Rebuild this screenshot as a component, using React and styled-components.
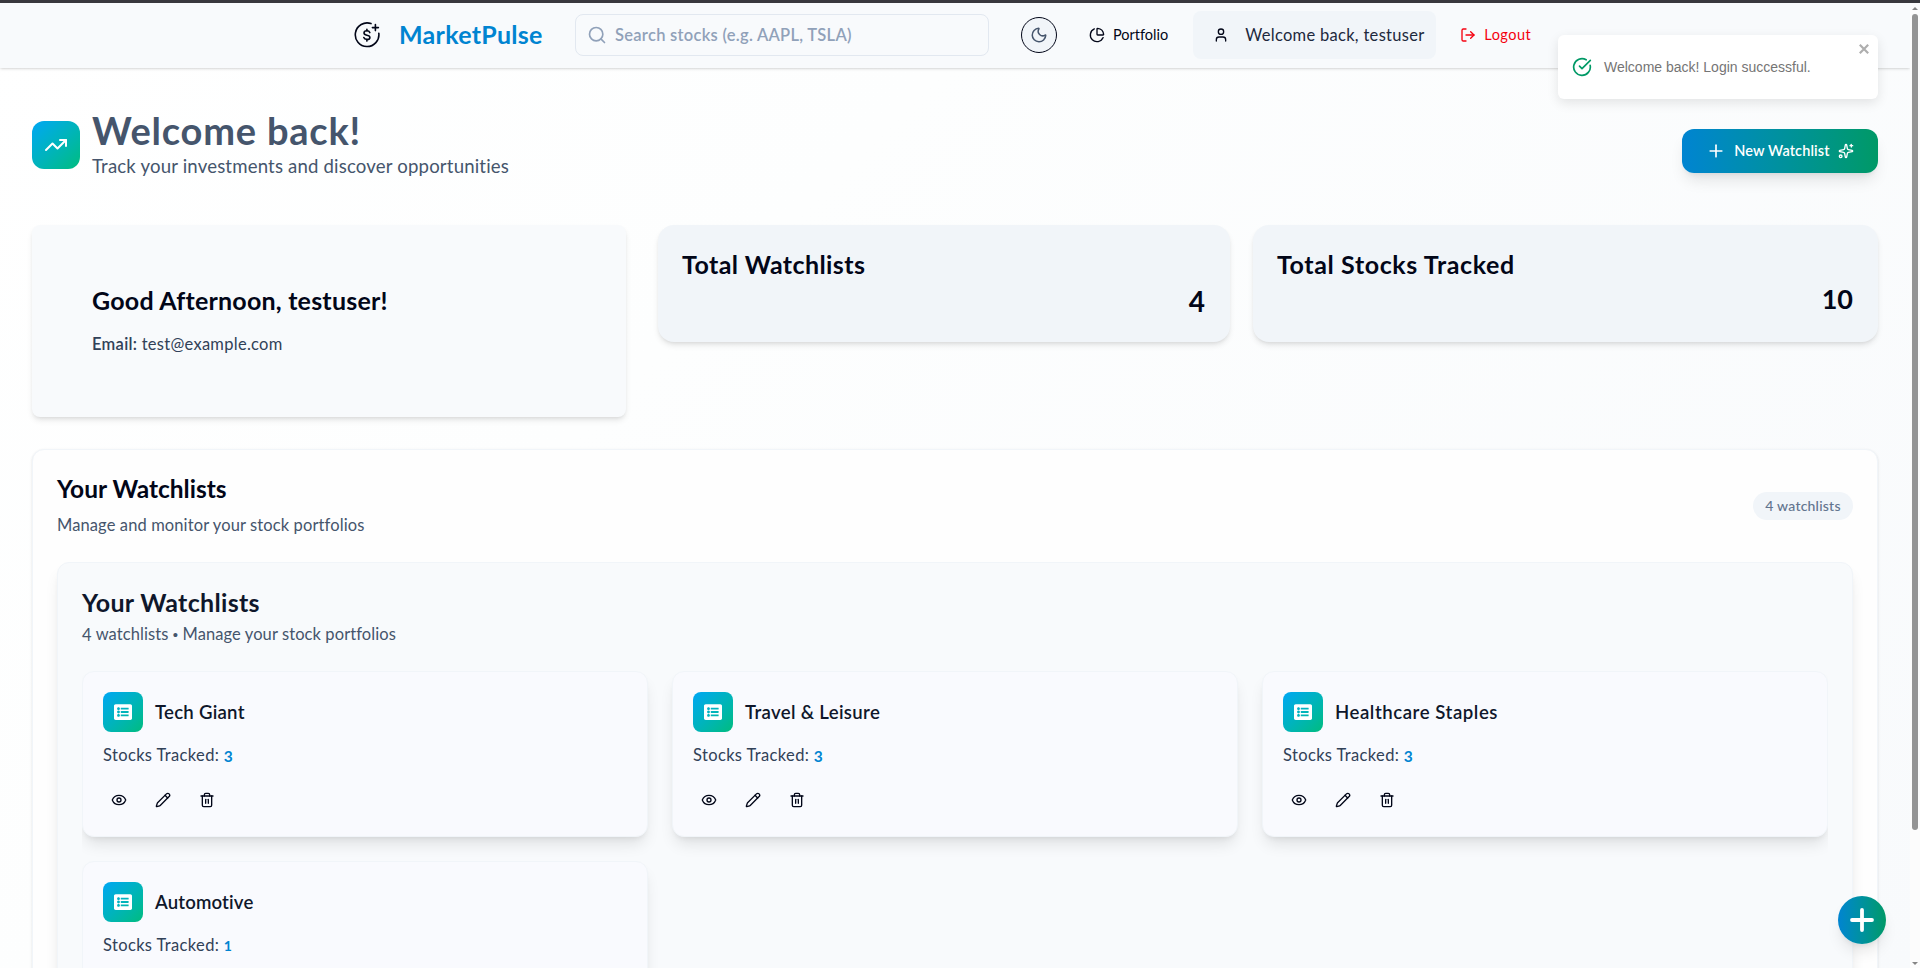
import React from "react";
import styled, { createGlobalStyle } from "styled-components";
import {
  ChartPie, CircleCheckBig, Eye, LogOut, Moon, Pencil, Plus, Search, Sparkles, Trash2, TrendingUp, User,
} from "lucide-react";
import { FaListAlt } from "react-icons/fa";

const GlobalStyle = createGlobalStyle`
  * { box-sizing: border-box; }
  html, body { margin: 0; height: 968px; overflow: hidden; }
  body { font-family: Lato, "Liberation Sans", sans-serif; color: #020618; font-variant-ligatures: none; }
  h1, h2, h3, p { margin: 0; }
  button { font: inherit; color: inherit; border: 0; padding: 0; background: none; }
  svg { flex: none; display: block; }
`;

const Screen = styled.div`
  display: grid;
  grid-template-columns: minmax(0, 1fr) 10px;
  height: 968px;
  overflow: hidden;
  border-top: 3px solid #38383d;
`;

const Page = styled.div`
  height: 965px;
  overflow: hidden;
  background: linear-gradient(135deg, #ffffff 0%, #fdfefe 35%, #f8fafc 100%);
`;

const Text = styled.span`
  font-size: ${(p) => p.$size || 16.5}px;
  font-weight: ${(p) => p.$weight || 400};
  line-height: ${(p) => p.$line || 24}px;
  letter-spacing: ${(p) => p.$track || 0}px;
  color: ${(p) => p.$color || "inherit"};
  white-space: pre;
`;

const Lowered = styled.span`
  position: relative;
  top: ${(p) => p.$by || 2}px;
`;

const Bullet = styled.span`
  font-family: "Liberation Sans", Arial, sans-serif;
  font-size: 15px;
`;

/* Header */
const Header = styled.header`
  display: flex;
  align-items: center;
  height: 65px;
  padding: 0 0 2px 354px;
  background: #f8fafc;
  box-shadow: 0 1px 3px rgba(0, 0, 0, 0.12), 0 1px 2px -1px rgba(0, 0, 0, 0.12);
`;

const Brand = styled.div`
  display: flex;
  align-items: center;
  gap: 19px;
  width: 221px;
`;

const BrandName = styled.div`
  display: flex;
  padding-bottom: 2px;
`;

const SearchBox = styled.div`
  display: flex;
  align-items: center;
  gap: 8px;
  width: 414px;
  height: 42px;
  padding: 0 11px;
  border: 1px solid #e2e8f0;
  border-radius: 8px;
  color: #90a1b9;
`;

const ThemeToggle = styled.button`
  display: grid;
  place-items: center;
  width: 36px;
  height: 36px;
  margin-left: 32px;
  border: 1px solid #020618;
  border-radius: 50%;
  background: #f1f5f9;
  color: #45556c;
`;

const NavButton = styled.button`
  display: flex;
  align-items: center;
  gap: 8px;
  margin-left: ${(p) => p.$left}px;
  color: ${(p) => p.$color || "#020618"};
`;

const UserChip = styled.div`
  display: flex;
  align-items: center;
  gap: 16px;
  width: 243px;
  height: 48px;
  margin-left: 25px;
  padding: 0 0 0 20px;
  border-radius: 8px;
  background: #f1f5f9;
`;

/* Toast */
const Toast = styled.div`
  position: absolute;
  top: 35px;
  left: 1558px;
  display: flex;
  align-items: center;
  gap: 12px;
  width: 320px;
  height: 64px;
  padding: 0 9px 0 14px;
  border-radius: 6px;
  background: #fff;
  box-shadow: 0 4px 12px rgba(0, 0, 0, 0.1);
  font-family: "Liberation Sans", Arial, sans-serif;
  color: #757575;
`;

const ToastClose = styled.svg`
  align-self: flex-start;
  margin: 9px 0 0 auto;
`;

/* Page heading */
const Main = styled.main`
  padding: 41px 32px 0;
`;

const Hero = styled.div`
  display: flex;
  align-items: center;
  height: 71px;
  margin-bottom: 45px;
`;

const GradientTile = styled.div`
  display: grid;
  place-items: center;
  flex: none;
  width: ${(p) => p.$size}px;
  height: ${(p) => p.$size}px;
  border-radius: ${(p) => p.$radius}px;
  background: linear-gradient(135deg in oklab, #00a6f4, #00bc7d);
  color: #fff;
`;

const HeroCopy = styled.div`
  display: flex;
  flex-direction: column;
  gap: 2px;
  margin-left: 12px;
  padding-top: 1px;
`;

const PrimaryButton = styled.button`
  display: flex;
  align-items: center;
  justify-content: center;
  gap: 8px;
  width: 196px;
  height: 44px;
  margin: 13px 0 0 auto;
  border-radius: 12px;
  background: linear-gradient(90deg in oklab, #0084d1, #009966);
  color: #fff;
  box-shadow: 0 10px 15px -3px rgba(0, 0, 0, 0.1), 0 4px 6px -4px rgba(0, 0, 0, 0.1);
`;

/* Summary */
const Summary = styled.section`
  display: flex;
  align-items: flex-start;
  height: 192px;
`;

const GreetingCard = styled.div`
  display: flex;
  flex-direction: column;
  gap: 16px;
  width: 594px;
  height: 192px;
  padding: 59px 60px;
  border-radius: 8px;
  background: #f8fafc;
  box-shadow: 0 4px 6px -1px rgba(0, 0, 0, 0.1), 0 2px 4px -2px rgba(0, 0, 0, 0.1);
`;

const StatCard = styled.div`
  display: flex;
  flex-direction: column;
  gap: 1px;
  width: ${(p) => p.$width}px;
  height: 117px;
  margin-left: ${(p) => p.$left}px;
  padding: 23px 25px 0 24px;
  border-radius: 16px;
  background: #f1f5f9;
  box-shadow: 0 4px 6px -1px rgba(0, 0, 0, 0.1), 0 2px 4px -2px rgba(0, 0, 0, 0.1);
`;

const StatValue = styled.div`
  align-self: flex-end;
`;

/* Watchlists */
const Panel = styled.section`
  height: 640px;
  margin-top: 32px;
  padding: 23px 24px;
  border: 1px solid #f1f5f9;
  border-radius: 12px;
  background: #fefefe;
  box-shadow: 0 1px 3px rgba(0, 0, 0, 0.1), 0 1px 2px -1px rgba(0, 0, 0, 0.1);
`;

const PanelHead = styled.div`
  display: flex;
  justify-content: space-between;
  align-items: center;
  height: 64px;
  margin-bottom: 25px;
`;

const Stack = styled.div`
  display: flex;
  flex-direction: column;
  gap: ${(p) => p.$gap}px;
`;

const Badge = styled.span`
  display: grid;
  place-items: center;
  width: 100px;
  height: 28px;
  margin-top: 2px;
  border-radius: 14px;
  background: #f1f5f9;
`;

const InnerPanel = styled.div`
  height: 560px;
  padding: 23px 24px;
  border: 1px solid #f1f5f9;
  border-radius: 12px;
  background: #f8fafc;
  box-shadow: 0 10px 15px -3px rgba(0, 0, 0, 0.1), 0 4px 6px -4px rgba(0, 0, 0, 0.1);
`;

const CardGrid = styled.div`
  display: grid;
  grid-template-columns: repeat(3, 1fr);
  gap: 24px;
  margin-top: 24px;
  overflow: hidden;
  padding-bottom: 30px;
`;

const WatchCard = styled.article`
  height: 166px;
  padding: 20px;
  border: 1px solid #f1f5f9;
  border-radius: 12px;
  background: #f9fafe;
  box-shadow: 0 10px 15px -3px rgba(0, 0, 0, 0.1), 0 4px 6px -4px rgba(0, 0, 0, 0.1);
`;

const CardTitle = styled.div`
  display: flex;
  align-items: center;
  gap: 12px;
  margin-bottom: 11px;
`;

const CardMeta = styled.div`
  height: 24px;
  line-height: 24px;
`;

const Actions = styled.div`
  display: flex;
  gap: 12px;
  margin-top: 17px;
`;

const IconButton = styled.button`
  display: grid;
  place-items: center;
  width: 32px;
  height: 32px;
`;

const Fab = styled.button`
  position: absolute;
  left: 1838px;
  top: 896px;
  display: grid;
  place-items: center;
  width: 48px;
  height: 48px;
  border-radius: 50%;
  background: linear-gradient(90deg in oklab, #0084d1, #009966);
  box-shadow: 0 10px 15px -3px rgba(0, 0, 0, 0.1), 0 4px 6px -4px rgba(0, 0, 0, 0.1);
`;

/* Scrollbar */
const Scrollbar = styled.div`
  display: flex;
  flex-direction: column;
  align-items: center;
  padding: 4px 1px 3px;
  background: #fcfcfc;
`;

const Thumb = styled.div`
  width: 6px;
  height: 816px;
  margin: 4px 0 auto;
  border-radius: 3px;
  background: #949494;
`;

const Arrow = ({ down }) => (
  <svg width="6" height="3" viewBox="0 0 6 3">
    <path d={down ? "M0 0h6L3 3z" : "M0 3h6L3 0z"} fill="#858585" />
  </svg>
);

const LogoMark = () => (
  <svg width="26" height="26" viewBox="0 0 26 26" fill="none" stroke="#020618" strokeWidth="1.6" strokeLinecap="round" strokeLinejoin="round">
    <path d="M17 1.6A11.8 11.8 0 1 0 24.8 11.2" />
    <path d="M21.4 2.6v6M18.4 5.6h6" />
    <path d="M12.9 7.2v1.6M12.9 17.4v1.7" />
    <path d="M15.8 10.6c-.4-1.1-1.5-1.8-2.9-1.8-1.7 0-2.9.9-2.9 2.2 0 1.4 1.2 1.9 2.9 2.2 1.8.3 3 .8 3 2.2 0 1.3-1.3 2.1-3 2.1-1.5 0-2.7-.7-3.1-1.9" />
  </svg>
);

const watchlists = [
  { name: "Tech Giant", count: 3, track: 0.25 },
  { name: "Travel & Leisure", count: 3, track: 0.33 },
  { name: "Healthcare Staples", count: 3, track: 0.55 },
  { name: "Automotive", count: 1, track: 0.15 },
];

function Watchlist({ name, count, track }) {
  return (
    <WatchCard>
      <CardTitle>
        <GradientTile $size={40} $radius={8}><FaListAlt size={18} /></GradientTile>
        <Text as="h3" $size={18.6} $weight={600} $track={track} $color="#0f172b">{name}</Text>
      </CardTitle>
      <CardMeta>
        <Text $track={0.36} $color="#314158">{"Stocks Tracked: "}</Text>
        {count === 1
          ? <Text $size={14} $weight={700} $color="#0084d1">{count}</Text>
          : <Lowered $by={1}><Text $size={15.5} $weight={700} $color="#0084d1">{count}</Text></Lowered>}
      </CardMeta>
      <Actions>
        <IconButton><Eye size={16} /></IconButton>
        <IconButton><Pencil size={16} /></IconButton>
        <IconButton><Trash2 size={16} /></IconButton>
      </Actions>
    </WatchCard>
  );
}

export default function App() {
  return (
    <Screen>
      <GlobalStyle />
      <Page>
        <Header>
          <Brand>
            <LogoMark />
            <BrandName>
              <Text $size={25} $weight={700} $line={30} $track={0.28} $color="#0084d1">MarketPulse</Text>
            </BrandName>
          </Brand>
          <SearchBox>
            <Search size={20} />
            <Text $weight={600} $track={0.28}>Search stocks (e.g. AAPL, TSLA)</Text>
          </SearchBox>
          <ThemeToggle><Moon size={18} /></ThemeToggle>
          <NavButton $left={32}>
            <ChartPie size={16} />
            <Text $size={14.5}>Portfolio</Text>
          </NavButton>
          <UserChip>
            <User size={16} />
            <Text $track={0.3} $color="#1d293d">Welcome back, testuser</Text>
          </UserChip>
          <NavButton $left={24} $color="#f5000f">
            <LogOut size={16} />
            <Text $size={14.5} $track={0.5}>Logout</Text>
          </NavButton>
        </Header>

        <Main>
          <Hero>
            <GradientTile $size={48} $radius={12}><TrendingUp size={24} /></GradientTile>
            <HeroCopy>
              <Text as="h1" $size={38} $weight={700} $line={40} $track={0.8} $color="#45556c">Welcome back!</Text>
              <Text as="p" $size={18.6} $line={28} $track={0.17} $color="#45556c">Track your investments and discover opportunities</Text>
            </HeroCopy>
            <PrimaryButton>
              <Plus size={20} />
              <Text $size={14.5} $weight={600} $track={0.12}>New Watchlist</Text>
              <Sparkles size={16} />
            </PrimaryButton>
          </Hero>

          <Summary>
            <GreetingCard>
              <Text as="h2" $size={25} $weight={700} $line={32} $track={0.22}>Good Afternoon, testuser!</Text>
              <Text as="p" $color="#314158">
                <Text $weight={600} $track={0.28}>Email: </Text>
                <Text $track={0.28}>test@example.com</Text>
              </Text>
            </GreetingCard>
            <StatCard $width={572} $left={32}>
              <Text as="h2" $size={25} $weight={700} $line={32} $track={0.42}>Total Watchlists</Text>
              <StatValue><Lowered $by={2}><Text $size={28} $weight={700} $line={36}>4</Text></Lowered></StatValue>
            </StatCard>
            <StatCard $width={625} $left={23}>
              <Text as="h2" $size={25} $weight={700} $line={32} $track={0.62}>Total Stocks Tracked</Text>
              <StatValue><Text $size={27} $weight={700} $line={36}>10</Text></StatValue>
            </StatCard>
          </Summary>

          <Panel>
            <PanelHead>
              <Stack $gap={8}>
                <Text as="h2" $size={24.5} $weight={700} $line={32}>Your Watchlists</Text>
                <Text as="p" $track={0.11} $color="#45556c">Manage and monitor your stock portfolios</Text>
              </Stack>
              <Badge><Text $size={14} $weight={500} $line={20} $track={0.22} $color="#62748e">4 watchlists</Text></Badge>
            </PanelHead>
            <InnerPanel>
              <Stack $gap={4}>
                <Text as="h2" $size={25} $weight={700} $line={32} $track={0.33} $color="#0f172b">Your Watchlists</Text>
                <Text as="p" $track={0.09} $color="#45556c"><Lowered $by={1}>4</Lowered> watchlists <Bullet>•</Bullet> Manage your stock portfolios</Text>
              </Stack>
              <CardGrid>
                {watchlists.map((w) => <Watchlist key={w.name} {...w} />)}
              </CardGrid>
            </InnerPanel>
          </Panel>
        </Main>
      </Page>

      <Scrollbar>
        <Arrow />
        <Thumb />
        <Arrow down />
      </Scrollbar>

      <Toast>
        <CircleCheckBig size={20} color="#009966" />
        <Text $size={14} $line={20}>Welcome back! Login successful.</Text>
        <ToastClose width="10" height="10" viewBox="0 0 10 10" stroke="#aeaeae" strokeWidth="2.2">
          <path d="M.8.8l8.4 8.4M9.2.8L.8 9.2" />
        </ToastClose>
      </Toast>
      <Fab>
        <svg width="24" height="24" viewBox="0 0 24 24" stroke="#fff" strokeWidth="3.8" strokeLinecap="round">
          <path d="M12 2v20M2 12h20" />
        </svg>
      </Fab>
    </Screen>
  );
}
